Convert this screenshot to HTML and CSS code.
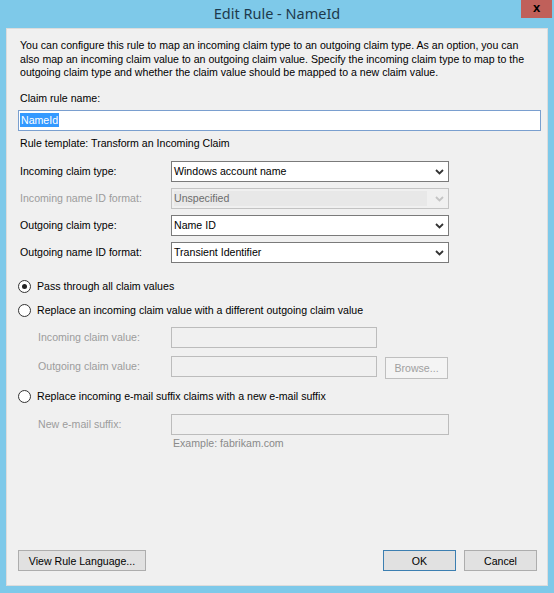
FILE: index.html
```html
<!DOCTYPE html>
<html>
<head>
<meta charset="utf-8">
<link rel="stylesheet" href="styles.css">
</head>
<body>
<div class="window">
  <div class="titlebar">
    <span class="title">Edit Rule - NameId</span>
    <div class="close">x</div>
  </div>
  <div class="client">
    <p class="desc">You can configure this rule to map an incoming claim type to an outgoing claim type. As an option, you can<br>also map an incoming claim value to an outgoing claim value. Specify the incoming claim type to map to the<br>outgoing claim type and whether the claim value should be mapped to a new claim value.</p>
    <div class="label lbl-name">Claim rule name:</div>
    <div class="textbox focused"><span class="sel">NameId</span></div>
    <div class="label lbl-template">Rule template: Transform an Incoming Claim</div>
    <div class="form-grid">
      <span class="label">Incoming claim type:</span>
      <div class="combo"><span class="combo-text">Windows account name</span><svg class="chev" width="9" height="6" viewBox="0 0 9 6"><path d="M1 1 L4.5 4.5 L8 1" fill="none" stroke="#333" stroke-width="1.8"/></svg></div>
      <span class="label disabled">Incoming name ID format:</span>
      <div class="combo combo-disabled"><span class="combo-text">Unspecified</span><svg class="chev" width="9" height="6" viewBox="0 0 9 6"><path d="M1 1 L4.5 4.5 L8 1" fill="none" stroke="#c4c4c4" stroke-width="1.8"/></svg></div>
      <span class="label">Outgoing claim type:</span>
      <div class="combo"><span class="combo-text">Name ID</span><svg class="chev" width="9" height="6" viewBox="0 0 9 6"><path d="M1 1 L4.5 4.5 L8 1" fill="none" stroke="#333" stroke-width="1.8"/></svg></div>
      <span class="label">Outgoing name ID format:</span>
      <div class="combo"><span class="combo-text">Transient Identifier</span><svg class="chev" width="9" height="6" viewBox="0 0 9 6"><path d="M1 1 L4.5 4.5 L8 1" fill="none" stroke="#333" stroke-width="1.8"/></svg></div>
    </div>

    <div class="radio-row r1"><span class="radio checked"></span><span>Pass through all claim values</span></div>
    <div class="radio-row r2"><span class="radio"></span><span>Replace an incoming claim value with a different outgoing claim value</span></div>
    <div class="sub-row s1"><span class="label disabled">Incoming claim value:</span><div class="field"></div></div>
    <div class="sub-row s2"><span class="label disabled">Outgoing claim value:</span><div class="field"></div><div class="btn btn-disabled">Browse...</div></div>
    <div class="radio-row r3"><span class="radio"></span><span>Replace incoming e-mail suffix claims with a new e-mail suffix</span></div>
    <div class="sub-row s3"><span class="label disabled">New e-mail suffix:</span><div class="field wide"></div></div>
    <div class="example">Example: fabrikam.com</div>

    <div class="buttons">
      <div class="btn btn-view">View Rule Language...</div>
      <div class="spacer"></div>
      <div class="btn btn-ok">OK</div>
      <div class="btn btn-cancel">Cancel</div>
    </div>
  </div>
</div>
</body>
</html>
```

FILE: styles.css
```css
html, body {
  margin: 0;
  padding: 0;
}
body {
  width: 554px;
  height: 593px;
  overflow: hidden;
  background: #7ec9e9;
  font-family: "Liberation Sans", Arial, sans-serif;
  font-size: 10.6px;
  color: #000;
}
.window {
  display: flex;
  flex-direction: column;
  height: 593px;
}
.titlebar {
  height: 28px;
  position: relative;
  display: flex;
  justify-content: center;
  align-items: center;
  flex: none;
}
.title {
  font-family: "Noto Sans", "Open Sans", sans-serif;
  font-size: 14.5px;
  color: #1d3a4c;
  margin-top: -3px;
}
.close {
  position: absolute;
  top: 0;
  right: 2px;
  width: 31px;
  height: 18px;
  background: #c0605a;
  color: #000;
  font-family: "Liberation Sans", Arial, sans-serif;
  font-weight: bold;
  font-size: 13px;
  line-height: 16px;
  text-align: center;
}
.client {
  flex: 1;
  margin: 0 6px 7px 6px;
  background: #f0f0f0;
  display: flex;
  flex-direction: column;
  padding: 11px 7px 15px 12px;
  box-shadow: inset 0 0 0 1px #dcdcdc;
}
.desc {
  margin: 0 0 0 2px;
  line-height: 13.5px;
  white-space: nowrap;
}
.label {
  line-height: 13px;
  white-space: nowrap;
}
.disabled {
  color: #9c9c9c;
}
.lbl-name {
  margin-top: 12px;
  padding-left: 2px;
}
.textbox {
  margin-top: 5.5px;
  height: 21px;
  box-sizing: border-box;
  border: 1px solid #7a9fcf;
  background: #fff;
  padding: 3px 0 0 1px;
  line-height: 13px;
}
.sel {
  background: #3399ff;
  color: #fff;
  padding: 1px 1px 1px 1px;
}
.lbl-template {
  margin-top: 5.5px;
  padding-left: 2px;
}
.form-grid {
  margin-top: 11.5px;
  margin-left: 2px;
  display: grid;
  grid-template-columns: 151px 278px;
  grid-auto-rows: 21px;
  row-gap: 6px;
  align-items: center;
}
.combo {
  height: 21px;
  box-sizing: border-box;
  border: 1px solid #7a7a7a;
  background: #fff;
  display: flex;
  align-items: center;
  padding-left: 2px;
}
.combo-text {
  flex: 1;
  line-height: 13px;
}
.chev {
  margin-right: 4px;
  margin-top: 1px;
}
.combo-disabled {
  border-color: #c3c3c3;
  background: #f0f0f0;
  padding: 2px 0 2px 2px;
}
.combo-disabled .combo-text {
  background: #e8e8e8;
  color: #6d6d6d;
  align-self: stretch;
  display: flex;
  align-items: center;
  margin-right: 8px;
}
.radio-row {
  display: flex;
  align-items: center;
  height: 16px;
  white-space: nowrap;
}
.r1 { margin-top: 15px; }
.r2 { margin-top: 8px; }
.r3 { margin-top: 9px; }
.radio {
  width: 13px;
  height: 13px;
  box-sizing: border-box;
  border: 1px solid #333;
  border-radius: 50%;
  background: #fff;
  margin-right: 6px;
  display: flex;
  align-items: center;
  justify-content: center;
}
.radio.checked::after {
  content: "";
  width: 5px;
  height: 5px;
  border-radius: 50%;
  background: #222;
}
.sub-row {
  display: flex;
  align-items: flex-start;
  padding-left: 20px;
}
.sub-row .label {
  width: 133px;
  line-height: 21px;
}
.s1 { margin-top: 9px; }
.s2 { margin-top: 8px; }
.s3 { margin-top: 10px; }
.field {
  width: 206px;
  height: 21px;
  box-sizing: border-box;
  border: 1px solid #bcbcbc;
  background: #f0f0f0;
}
.field.wide {
  width: 278px;
}
.btn {
  height: 21px;
  box-sizing: border-box;
  border: 1px solid #adadad;
  background: #e1e1e1;
  display: flex;
  align-items: center;
  justify-content: center;
  white-space: nowrap;
}
.btn-disabled {
  margin-left: 8px;
  margin-top: 1px;
  width: 63px;
  height: 22px;
  border-color: #bfbfbf;
  background: #f4f4f4;
  color: #a0a0a0;
}
.example {
  margin-top: 1.5px;
  padding-left: 155px;
  line-height: 13px;
  color: #8a8a8a;
}
.buttons {
  margin-top: auto;
  margin-right: 4px;
  display: flex;
  gap: 8px;
}
.spacer { flex: 1; }
.btn-view { width: 128px; }
.btn-ok {
  width: 73px;
  border-color: #3c7fb1;
}
.btn-cancel { width: 73px; }
```
